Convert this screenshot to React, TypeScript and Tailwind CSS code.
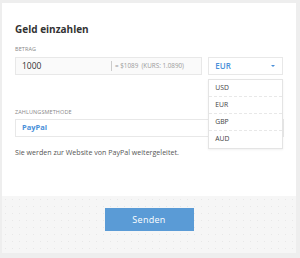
import { useState } from "react";

const currencies = ["USD", "EUR", "GBP", "AUD"];

export default function App() {
  const [amount, setAmount] = useState("1000");
  const [currency] = useState("EUR");

  return (
    <div className="w-[300px] h-[258px] bg-[#eeeeee] pt-[3px] pl-[2px] pr-[4px] font-['Open_Sans',sans-serif]">
      {/* Form body */}
      <div className="relative bg-white h-[193px] px-[13px] pt-[19px]">
        <h1 className="text-[10px] leading-[14px] font-bold text-[#333333]">
          Geld einzahlen
        </h1>

        <div className="mt-[10px] text-[5.5px] leading-[6px] tracking-[0.1px] text-[#888888] uppercase">
          Betrag
        </div>
        <div className="mt-[5px] flex gap-[6px]">
          <div className="flex items-center w-[188px] h-[18px] border border-[#e8e8e8] bg-[#fafafa]">
            <input
              value={amount}
              onChange={(e) => setAmount(e.target.value)}
              className="w-[95px] pl-[6px] bg-transparent text-[8.5px] text-[#333333] outline-none"
            />
            <span className="h-[10px] border-l border-[#cccccc]" />
            <span className="ml-[3px] text-[6.3px] text-[#999999] whitespace-nowrap">
              = $1089 &nbsp;(KURS: 1.0890)
            </span>
          </div>
          <div className="relative w-[75px]">
            <div className="flex items-center justify-between h-[18px] border border-[#e8e8e8] bg-white pl-[6px] pr-[7px]">
              <span className="text-[8px] font-semibold text-[#4a90d9]">
                {currency}
              </span>
              <span className="w-0 h-0 border-l-[2px] border-r-[2px] border-t-[2px] border-l-transparent border-r-transparent border-t-[#4a90d9]" />
            </div>
            {/* open dropdown */}
            <ul className="absolute left-0 top-[22px] w-[75px] bg-white border border-[#e4e4e4] shadow-[0_1px_2px_rgba(0,0,0,0.06)] z-10">
              {currencies.map((c, i) => (
                <li
                  key={c}
                  className={`h-[17px] flex items-center pl-[6px] text-[6.8px] text-[#444444] ${
                    i < currencies.length - 1 ? "border-b border-dashed border-[#e8e8e8]" : ""
                  }`}
                >
                  {c}
                </li>
              ))}
            </ul>
          </div>
        </div>

        <div className="mt-[34px] text-[5.5px] leading-[6px] tracking-[0.1px] text-[#888888] uppercase">
          Zahlungsmethode
        </div>
        <div className="mt-[4px] flex items-center h-[18px] w-[269px] border border-[#e8e8e8] bg-white pl-[6px]">
          <span className="text-[7.5px] font-bold text-[#4a90d9]">PayPal</span>
        </div>

        <p className="mt-[11px] text-[7.1px] leading-[9px] text-[#555555]">
          Sie werden zur Website von PayPal weitergeleitet.
        </p>
      </div>

      {/* Footer */}
      <div className="h-[57px] bg-[#f6f6f6] bg-[radial-gradient(#e8e8e8_0.5px,transparent_0.6px)] bg-[size:7px_7px] flex justify-center pt-[12px]">
        <button className="w-[89px] h-[23px] bg-[#5a9bd6] text-white text-[9px] tracking-[0.3px]">
          Senden
        </button>
      </div>
    </div>
  );
}
